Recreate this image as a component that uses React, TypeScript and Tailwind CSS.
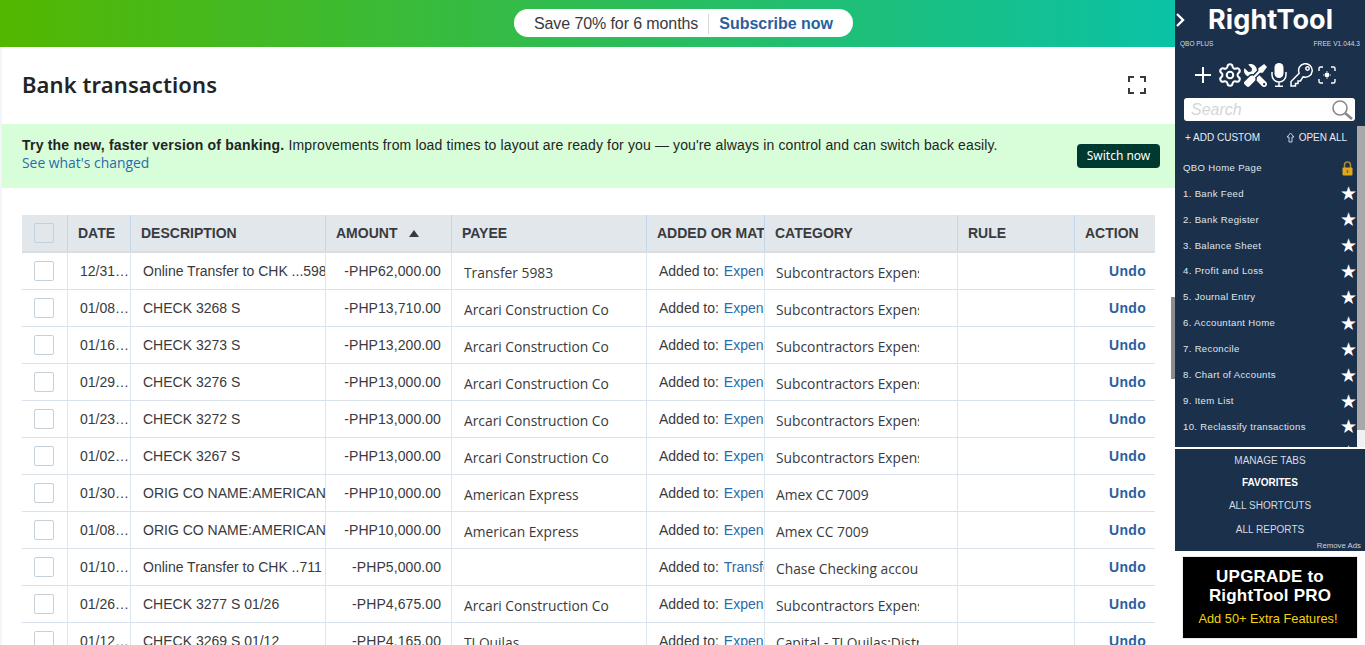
import React from "react";
import { FaTools } from "react-icons/fa";
import { Settings } from "lucide-react";

type Row = {
  date: string;
  desc: string;
  amount: string;
  payee: string;
  link: string;
  category: string;
};

const rows: Row[] = [
  { date: "12/31/2024", desc: "Online Transfer to CHK ...5983", amount: "-PHP62,000.00", payee: "Transfer 5983", link: "Expense", category: "Subcontractors Expense" },
  { date: "01/08/2025", desc: "CHECK 3268 S", amount: "-PHP13,710.00", payee: "Arcari Construction Co", link: "Expense", category: "Subcontractors Expense" },
  { date: "01/16/2025", desc: "CHECK 3273 S", amount: "-PHP13,200.00", payee: "Arcari Construction Co", link: "Expense", category: "Subcontractors Expense" },
  { date: "01/29/2025", desc: "CHECK 3276 S", amount: "-PHP13,000.00", payee: "Arcari Construction Co", link: "Expense", category: "Subcontractors Expense" },
  { date: "01/23/2025", desc: "CHECK 3272 S", amount: "-PHP13,000.00", payee: "Arcari Construction Co", link: "Expense", category: "Subcontractors Expense" },
  { date: "01/02/2025", desc: "CHECK 3267 S", amount: "-PHP13,000.00", payee: "Arcari Construction Co", link: "Expense", category: "Subcontractors Expense" },
  { date: "01/30/2025", desc: "ORIG CO NAME:AMERICAN EXPRESS", amount: "-PHP10,000.00", payee: "American Express", link: "Expense", category: "Amex CC 7009" },
  { date: "01/08/2025", desc: "ORIG CO NAME:AMERICAN EXPRESS", amount: "-PHP10,000.00", payee: "American Express", link: "Expense", category: "Amex CC 7009" },
  { date: "01/10/2025", desc: "Online Transfer to CHK ..711", amount: "-PHP5,000.00", payee: "", link: "Transfer", category: "Chase Checking account" },
  { date: "01/26/2025", desc: "CHECK 3277 S 01/26", amount: "-PHP4,675.00", payee: "Arcari Construction Co", link: "Expense", category: "Subcontractors Expense" },
  { date: "01/12/2025", desc: "CHECK 3269 S 01/12", amount: "-PHP4,165.00", payee: "TJ Quilas", link: "Expense", category: "Capital - TJ Quilas:Distribution" },
];

const shortcuts = [
  "1. Bank Feed",
  "2. Bank Register",
  "3. Balance Sheet",
  "4. Profit and Loss",
  "5. Journal Entry",
  "6. Accountant Home",
  "7. Reconcile",
  "8. Chart of Accounts",
  "9. Item List",
  "10. Reclassify transactions",
  "",
];

function Checkbox({ header }: { header?: boolean }) {
  return (
    <div
      className={`w-5 h-5 rounded-[2px] border border-[#c4d0da] ${header ? "bg-[#e1e7eb]" : "bg-white"}`}
    />
  );
}

function HeaderCell({ label, className }: { label: string; className: string }) {
  return (
    <div className={`h-full flex items-center pl-[10px] overflow-hidden whitespace-nowrap border-r border-[#c3d5ea] ${className}`}>
      {label}
    </div>
  );
}

function Table() {
  return (
    <div className="w-[1133px] ml-[20px] mt-[27px] font-['Liberation_Sans',sans-serif] text-[14px] text-[#393a3d]">
      <div className="flex h-[38px] bg-[#e1e7eb] border-b-[2px] border-[#dcdddf] font-bold">
        <div className="w-[46px] h-full flex items-center pl-[12px] border-r border-[#c3d5ea]">
          <Checkbox header />
        </div>
        <HeaderCell label="DATE" className="w-[63px]" />
        <HeaderCell label="DESCRIPTION" className="w-[195px]" />
        <div className="w-[126px] h-full flex items-center pl-[10px] border-r border-[#c3d5ea]">
          AMOUNT
          <span className="ml-[12px] w-0 h-0 border-l-[5px] border-r-[5px] border-b-[7px] border-l-transparent border-r-transparent border-b-[#393a3d]" />
        </div>
        <HeaderCell label="PAYEE" className="w-[195px]" />
        <HeaderCell label="ADDED OR MATCHED" className="w-[118px]" />
        <HeaderCell label="CATEGORY" className="w-[193px]" />
        <HeaderCell label="RULE" className="w-[117px]" />
        <div className="flex-1 h-full flex items-center pl-[10px]">ACTION</div>
      </div>
      {rows.map((row, i) => (
        <div key={i} className="flex h-[37px] border-b border-[#d9e2ea] text-[#393a3d]">
          <div className="w-[46px] h-full flex items-center pl-[12px] border-r border-[#dde6ee]">
            <Checkbox />
          </div>
          <div className="w-[63px] h-full flex items-center pl-[12px] border-r border-[#dde6ee]">
            <span className="block w-[50px] truncate">{row.date}</span>
          </div>
          <div className="w-[195px] h-full flex items-center pl-[12px] border-r border-[#dde6ee] overflow-hidden whitespace-nowrap">
            {row.desc}
          </div>
          <div className="w-[126px] h-full flex items-center justify-end pr-[10px] border-r border-[#dde6ee] tracking-[0.08px]">
            {row.amount}
          </div>
          <div className="w-[195px] h-full flex items-center pl-[12px] pt-[4px] border-r border-[#dde6ee] font-['Open_Sans',sans-serif] text-[13.8px] whitespace-nowrap">
            {row.payee}
          </div>
          <div className="w-[118px] h-full flex items-center pl-[12px] border-r border-[#dde6ee] overflow-hidden whitespace-nowrap">
            Added to:&nbsp;
            <span className="ml-[1px] w-[40px] inline-block overflow-hidden text-[#2c6aa8]">{row.link}</span>
          </div>
          <div className="w-[193px] h-full flex items-center pl-[11px] pt-[4px] border-r border-[#dde6ee] font-['Open_Sans',sans-serif] text-[13.8px]">
            <span className="block w-[143px] overflow-hidden whitespace-nowrap">{row.category}</span>
          </div>
          <div className="w-[117px] h-full border-r border-[#dde6ee]" />
          <div className="flex-1 h-full flex items-center justify-end pr-[9px] font-bold tracking-[0.3px] text-[#2a5f9e]">
            Undo
          </div>
        </div>
      ))}
    </div>
  );
}

function Main() {
  return (
    <div className="relative w-[1175px] h-[645px] overflow-hidden bg-[#f4f5f8] pl-[2px]">
      <div className="h-full bg-white">
        <div className="-ml-[2px] h-[47px] flex items-center pl-[514px] pb-[1px] bg-linear-to-r/srgb from-[#53b700] to-[#0ac2a6] font-['Liberation_Sans',sans-serif]">
          <div className="flex items-center h-[28px] w-[339px] rounded-[14px] bg-white pl-[20px] pt-[1px] text-[16px]">
            <span className="text-[#393a3d] tracking-[-0.1px]">Save 70% for 6 months</span>
            <span className="h-[20px] mx-[10px] border-l border-[#d4d7dc]" />
            <span className="font-bold text-[#2a5f9e]">Subscribe now</span>
          </div>
        </div>
        <div className="h-[77px] flex items-center justify-between pl-[20px] pr-[29px] pb-[2px]">
          <h1 className="font-['Noto_Sans',sans-serif] text-[22px] font-semibold tracking-[0.1px] text-[#242424]">Bank transactions</h1>
          <svg width="18" height="18" viewBox="0 0 18 18" fill="none" stroke="#393a3d" strokeWidth="2">
            <path d="M1 6V1h5M12 1h5v5M17 12v5h-5M6 17H1v-5" />
          </svg>
        </div>
        <div className="h-[64px] flex items-center justify-between bg-[#d7fed9] pl-[20px] pr-[15px] text-[14px] tracking-[0.135px] font-['Liberation_Sans',sans-serif] text-[#242424] leading-[18px]">
          <div className="mb-[4px]">
            <div>
              <b className="tracking-[0.2px]">Try the new, faster version of banking.</b> Improvements from load times to layout are ready for you — you're always in control and can switch back easily.
            </div>
            <div className="text-[#2c6aa8] font-['Open_Sans',sans-serif] text-[13.9px] tracking-normal">See what's changed</div>
          </div>
          <div className="h-[24px] w-[83px] flex items-center justify-center rounded-[4px] bg-[#00392f] text-white text-[12px] tracking-normal font-['Noto_Sans',sans-serif]">
            Switch now
          </div>
        </div>
        <Table />
      </div>
      <div className="absolute right-0 top-[297px] h-[82px] w-[4px] bg-[#8d8d90]" />
    </div>
  );
}

function ToolIcons() {
  return (
    <div className="flex items-center h-[32px] mt-[11px] pl-[20px] text-white">
      <svg width="16" height="16" viewBox="0 0 16 16" stroke="white" strokeWidth="2">
        <path d="M8 0v16M0 8h16" />
      </svg>
      <Settings size={26} strokeWidth={1.9} className="ml-[6px]" />
      <FaTools size={23} className="ml-[1px] -scale-x-100" />
      <svg width="16" height="24" viewBox="0 0 16 24" fill="none" stroke="white" strokeWidth="1.5" className="ml-[4px]">
        <rect x="3.5" y="0" width="9" height="15" rx="4.5" fill="white" stroke="none" />
        <path d="M1 9v3a7 7 0 0 0 14 0V9M8 19v4M4 23.2h8" />
      </svg>
      <svg width="23" height="24" viewBox="0 0 23 24" fill="none" stroke="white" strokeWidth="1.5" className="ml-[3px]">
        <path d="M9.2 10.2L1 18.5V23H5.5V20.5H8V18H10.5L13 13.8A6.8 6.8 0 1 0 9.2 10.2Z" />
        <circle cx="17.5" cy="5.5" r="1.7" />
      </svg>
      <svg width="18" height="18" viewBox="0 0 18 18" fill="none" stroke="white" strokeWidth="1.4" className="ml-[5px]">
        <path d="M1 5V2.5A1.5 1.5 0 0 1 2.5 1H5M13 1h2.5A1.5 1.5 0 0 1 17 2.5V5M17 13v2.5a1.5 1.5 0 0 1-1.5 1.5H13M5 17H2.5A1.5 1.5 0 0 1 1 15.5V13" />
        <circle cx="9" cy="9" r="2.4" fill="white" stroke="none" />
        <path d="M9 5.2v1M9 11.8v1M5.2 9h1M11.8 9h1" strokeWidth="1" />
      </svg>
    </div>
  );
}

function Sidebar() {
  return (
    <div className="w-[190px] h-[645px] bg-white font-['Liberation_Sans',sans-serif] overflow-hidden">
      <div className="h-[551px] bg-[#1b304b] flex flex-col">
        <div className="h-[126px] shrink-0">
          <div className="flex items-center h-[38px] pt-[2px]">
            <svg width="9" height="14" viewBox="0 0 9 14" fill="none" stroke="white" strokeWidth="2.4" className="ml-[1px]">
              <path d="M1 1l6 6-6 6" />
            </svg>
            <span className="ml-[23px] font-['Inter',sans-serif] font-bold text-[27px] text-white tracking-[0.1px]">RightTool</span>
          </div>
          <div className="flex justify-between pl-[5px] pr-[5px] text-[6.5px] leading-[8px] mt-[2px] text-[#d3dbe4]">
            <span>QBO PLUS</span>
            <span className="tracking-[0.1px]">FREE V1.044.3</span>
          </div>
          <ToolIcons />
          <div className="relative mx-[9px] mt-[7px] h-[23px] w-[171px] rounded-[3px] bg-white flex items-center pl-[7px]">
            <span className="italic text-[16px] text-[#d6d6d6]">Search</span>
            <svg width="22" height="20" viewBox="0 0 22 20" fill="none" stroke="#888888" className="absolute right-[1px] top-[2px]">
              <circle cx="8" cy="8" r="7" strokeWidth="1.6" />
              <path d="M13 13l7 6" strokeWidth="2.6" />
            </svg>
          </div>
        </div>
        <div className="relative h-[323px] shrink-0 overflow-hidden border-b-[2px] border-white">
          <div className="flex items-center justify-between h-[22px] pl-[10px] pr-[18px] text-[10px] text-[#e8edf2]">
            <span>+ ADD CUSTOM</span>
            <span className="flex items-center gap-[4px]">
              <svg width="9" height="11" viewBox="0 0 9 11" fill="none" stroke="#c9d3de" strokeWidth="1">
                <path d="M4.5 1L1 5h2v5h3V5h2z" />
              </svg>
              OPEN ALL
            </span>
          </div>
          <div className="flex items-center justify-between h-[26px] pl-[8px] pr-[11px] mt-[7px] text-[9.6px] tracking-[0.32px] text-[#dfe6ee]">
            <span>QBO Home Page</span>
            <svg width="13" height="15" viewBox="0 0 12 15">
              <path d="M3 7V4a3 3 0 0 1 6 0v3" fill="none" stroke="#a88a3a" strokeWidth="1.5" />
              <rect x="1" y="6.5" width="10" height="8" rx="1" fill="#e2a81c" />
              <rect x="5.2" y="9" width="1.6" height="3" fill="#8a6510" />
            </svg>
          </div>
          {shortcuts.map((label, i) => (
            <div key={i} className="flex items-center justify-between h-[25.9px] pl-[8px] pr-[8px] text-[9.6px] tracking-[0.32px] text-[#dfe6ee]">
              <span>{label}</span>
              <span className="font-['DejaVu_Sans',sans-serif] text-[19px] leading-none tracking-normal text-white">★</span>
            </div>
          ))}
          <div className="absolute right-0 top-0 bottom-0 w-[8px] bg-[#f1f1f1]">
            <div className="h-[304px] bg-[#a8a8a8]" />
          </div>
        </div>
        <div className="flex-1 flex flex-col items-center text-[10px] text-[#d3dbe4] relative">
          <div className="h-[22px] flex items-center">MANAGE TABS</div>
          <div className="h-[23px] flex items-center font-bold text-white">FAVORITES</div>
          <div className="h-[23px] flex items-center">ALL SHORTCUTS</div>
          <div className="h-[25px] flex items-center">ALL REPORTS</div>
          <div className="absolute right-[4px] bottom-0 text-[7.8px] leading-[10px] text-[#c9d3de]">Remove Ads</div>
        </div>
      </div>
      <div className="mt-[6px] ml-[8px] w-[174px] h-[81px] bg-black flex flex-col items-center pt-[10px] shadow-[0_0_1px_#888]">
        <div className="font-bold text-[17px] leading-[19px] text-white tracking-[0.2px]">UPGRADE to</div>
        <div className="font-bold text-[17px] leading-[19px] text-white tracking-[0.2px]">RightTool PRO</div>
        <div className="mt-[6px] mr-[4px] text-[12.8px] leading-[15px] text-[#f2d40a]">Add 50+ Extra Features!</div>
      </div>
    </div>
  );
}

export default function App() {
  return (
    <div className="flex w-[1365px] h-[645px] overflow-hidden">
      <Main />
      <Sidebar />
    </div>
  );
}
